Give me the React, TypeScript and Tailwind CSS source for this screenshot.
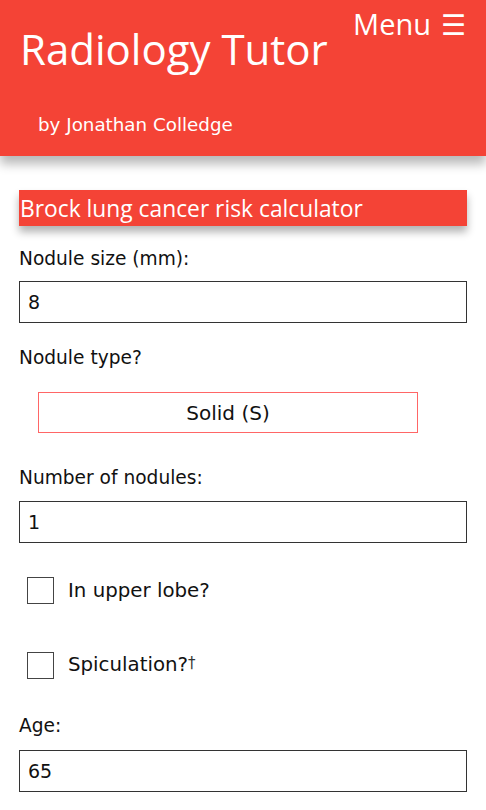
export default function App() {
  return (
    <div className="min-h-[810px] bg-white font-['DejaVu_Sans',sans-serif] text-[#111]">
      <header className="relative flex h-[156px] flex-col bg-[#f44336] text-white shadow-[0_8px_10px_rgba(0,0,0,0.28)]">
        <div className="flex items-start justify-between">
          <h1 className="pl-[20px] pt-[21px] font-['Open_Sans',sans-serif] text-[42px] leading-[56px]">
            Radiology Tutor
          </h1>
          <button
            type="button"
            className="flex items-center gap-[10px] pr-[20px] pt-[6px] font-['Open_Sans',sans-serif] text-[29px] leading-[36px]"
          >
            Menu <span className="text-[28px]">☰</span>
          </button>
        </div>
        <p className="pl-[38px] pt-[37px] text-[18.3px] leading-[22px]">by Jonathan Colledge</p>
      </header>

      <main className="px-[19px] pt-[34px]">
        <h2 className="h-[36px] bg-[#f44336] pl-[1px] pt-[2px] font-['Open_Sans',sans-serif] text-[22.8px] leading-[34px] text-white shadow-[0_6px_8px_rgba(0,0,0,0.3)]">
          Brock lung cancer risk calculator
        </h2>

        <label className="mt-[22px] block text-[18.6px] leading-[22px]">Nodule size (mm):</label>
        <input
          readOnly
          value="8"
          className="mt-[11px] block h-[42px] w-full border border-[#333] px-[8px] text-[19px]"
        />

        <label className="mt-[24px] block text-[18.6px] leading-[22px]">Nodule type?</label>
        <div className="flex justify-center pt-[23px] pr-[30px]">
          <button
            type="button"
            className="h-[41px] w-[380px] border border-[#f66] text-[20px] text-[#111]"
          >
            Solid (S)
          </button>
        </div>

        <label className="mt-[34px] block text-[18.6px] leading-[22px]">Number of nodules:</label>
        <input
          readOnly
          value="1"
          className="mt-[12px] block h-[42px] w-full border border-[#333] px-[8px] text-[19px]"
        />

        <div className="mt-[34px] flex h-[27px] items-center gap-[14px] pl-[8px]">
          <span className="block h-[27px] w-[27px] border-[1.5px] border-[#444] bg-white" />
          <span className="text-[19.8px] leading-[27px]">In upper lobe?</span>
        </div>

        <div className="mt-[48px] flex h-[27px] items-center gap-[14px] pl-[8px]">
          <span className="block h-[27px] w-[27px] border-[1.5px] border-[#444] bg-white" />
          <span className="text-[19.8px] leading-[27px]">
            Spiculation?<span className="relative top-[-3px] text-[15px] text-[#333]">†</span>
          </span>
        </div>

        <label className="mt-[36px] block text-[18.6px] leading-[22px]">Age:</label>
        <input
          readOnly
          value="65"
          className="mt-[13px] block h-[42px] w-full border border-[#333] px-[8px] text-[19px]"
        />
      </main>
    </div>
  );
}
